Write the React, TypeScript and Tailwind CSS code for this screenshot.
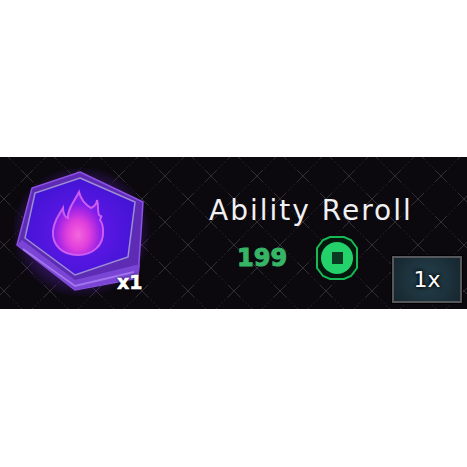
const font = { fontFamily: "'DejaVu Sans', sans-serif" }

// diagonal mesh behind the whole strip
function Mesh() {
  return (
    <svg className="absolute inset-0 w-full h-full" width="467" height="152">
      <defs>
        <pattern id="mesh" width="46" height="46" patternUnits="userSpaceOnUse" patternTransform="translate(4 -4)">
          <path d="M0 0L46 46M46 0L0 46" stroke="#211e25" strokeWidth="1" strokeDasharray="2 2" />
          <path d="M17 17L29 29M29 17L17 29M-6 -6L6 6M6 -6L-6 6M40 -6L52 6M52 -6L40 6M-6 40L6 52M6 40L-6 52M40 40L52 52M52 40L40 52" stroke="#312e36" strokeWidth="1" />
        </pattern>
      </defs>
      <rect width="467" height="152" fill="url(#mesh)" />
    </svg>
  )
}

function Badge() {
  return (
    <svg width="140" height="130" viewBox="0 0 140 130">
      <defs>
        <radialGradient id="glow" cx="50%" cy="50%" r="50%">
          <stop offset="75%" stopColor="#4c1d95" stopOpacity="0.5" />
          <stop offset="100%" stopColor="#4c1d95" stopOpacity="0" />
        </radialGradient>
        <radialGradient id="face" cx="50%" cy="55%" r="60%">
          <stop offset="0%" stopColor="#6a18ee" />
          <stop offset="100%" stopColor="#3f14d2" />
        </radialGradient>
        <radialGradient id="fire" cx="50%" cy="68%" r="50%">
          <stop offset="0%" stopColor="#f566dc" />
          <stop offset="45%" stopColor="#e03fdc" />
          <stop offset="80%" stopColor="#a526e4" />
          <stop offset="100%" stopColor="#7a1fea" />
        </radialGradient>
      </defs>
      <ellipse cx="67" cy="64" rx="70" ry="66" fill="url(#glow)" />
      <path d="M66 4L129 34L124 110L61 122L3 77L18 20Z" fill="#5e2cb4" stroke="#8e52e8" strokeWidth="1.5" />
      <path d="M3 77L61 122L124 110L126 96L61 112L8 72Z" fill="#7a45d4" />
      <path d="M9 81L61 118L120 104" fill="none" stroke="#a274ee" strokeWidth="2" />
      <path d="M66 10L121 34L114 89L61 107L11 70L21 25Z" fill="url(#face)" stroke="#9d8cd6" strokeWidth="1.5" />
      <path d="M65 24C67 32 72 37 77 40C81 38 83 35 83 32C85 38 83 42 85 47C88 50 88 46 86 52C89 56 89 60 89 63C90 78 78 87 64 87C48 87 38 77 39 63C40 54 44 48 49 40C49 46 51 49 54 50C53 42 60 34 65 24Z" fill="url(#fire)" stroke="#cf5cf0" strokeWidth="2" />
    </svg>
  )
}

function Coin() {
  return (
    <svg width="42" height="44" viewBox="0 0 42 44">
      <path d="M14 1H28L35 4L41 12V32L35 40L28 43H14L7 40L1 32V12L7 4Z" fill="#04190e" stroke="#17b954" strokeWidth="2" />
      <circle cx="21" cy="22" r="16" fill="#23d26a" />
      <rect x="16" y="16" width="11" height="12" fill="#0a3a22" />
    </svg>
  )
}

export default function App() {
  return (
    <div className="w-[467px] h-[467px] bg-white flex flex-col pt-[157px]" style={font}>
      <div className="relative w-full h-[152px] bg-[#0b080e] overflow-hidden flex">
        <Mesh />
        <div className="relative w-[160px] h-full flex items-start pl-[14px] pt-[11px]">
          <Badge />
          <span className="absolute left-[117px] top-[116px] text-[19px] leading-none font-bold text-white [-webkit-text-stroke:0.5px_#fff] [text-shadow:0_0_3px_#000]">x1</span>
        </div>
        <div className="relative flex-1 flex flex-col items-start pl-[49px] pt-[40px]">
          <h1 className="text-[28px] leading-none text-[#f1f0f2] whitespace-nowrap tracking-[2px]">Ability Reroll</h1>
          <div className="flex items-center mt-[11px] pl-[28px] gap-[29px]">
            <span className="text-[24px] leading-none font-bold text-[#35b565] [-webkit-text-stroke:1px_#35b565]">199</span>
            <Coin />
          </div>
        </div>
        <div className="absolute left-[392px] top-[99px] w-[70px] h-[47px] border-2 border-[#55575a] shadow-[0_0_0_1px_#000] bg-[radial-gradient(circle,#24414d,#16262e)] flex items-center justify-center text-[22px] text-white [text-shadow:0_0_4px_#000,0_0_4px_#000]">
          1x
        </div>
      </div>
    </div>
  )
}
